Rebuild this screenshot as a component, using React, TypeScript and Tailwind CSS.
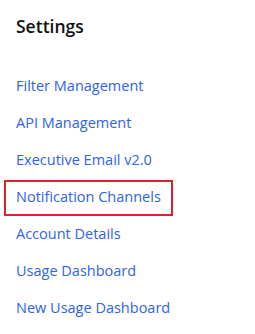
const items = [
  'Filter Management',
  'API Management',
  'Executive Email v2.0',
  'Notification Channels',
  'Account Details',
  'Usage Dashboard',
  'New Usage Dashboard',
];

const ACTIVE = 'Notification Channels';

export default function App() {
  return (
    <div className="h-[334px] w-[255px] bg-white font-['Open_Sans',sans-serif]">
      <h2 className="px-4 pt-[13px] text-[17.5px] font-semibold leading-[26px] text-[#111]">Settings</h2>
      {/* nav list */}
      <nav className="mt-[30px] flex flex-col items-start gap-[1px] pl-[4px]">
        {items.map((label) => (
          <a
            key={label}
            href="#"
            className={
              label === ACTIVE
                ? 'border-2 border-[#e0202e] px-[10px] pt-[4px] pb-[7px] text-[14.5px] leading-[21px] text-[#2f63e8]'
                : 'border-2 border-transparent px-[10px] pt-[4px] pb-[7px] text-[14.5px] leading-[21px] text-[#2f63e8]'
            }>
            {label}
          </a>
        ))}
      </nav>
    </div>
  );
}
